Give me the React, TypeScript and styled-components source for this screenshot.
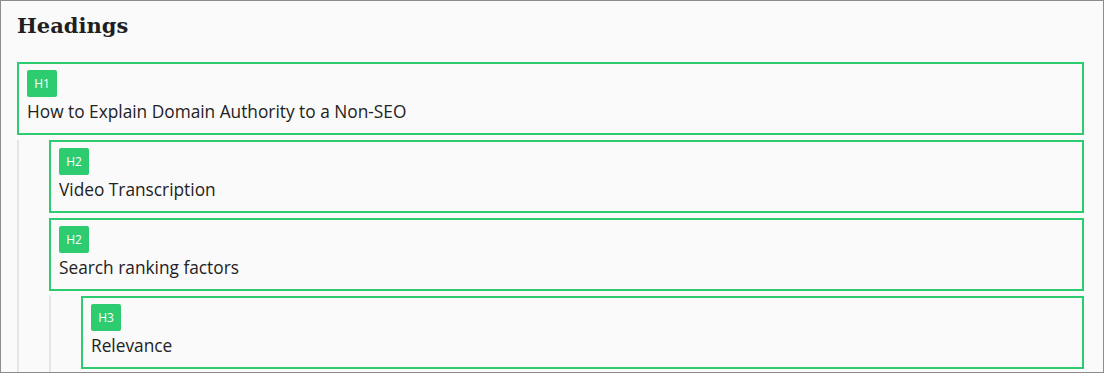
import React from 'react'
import styled, { createGlobalStyle } from 'styled-components'

const GlobalStyle = createGlobalStyle`
  html, body {
    margin: 0;
    padding: 0;
    background: #ffffff;
  }
`

type HeadingNode = {
  level: number
  text: string
  children?: HeadingNode[]
}

const headings: HeadingNode[] = [
  {
    level: 1,
    text: 'How to Explain Domain Authority to a Non-SEO',
    children: [
      { level: 2, text: 'Video Transcription' },
      {
        level: 2,
        text: 'Search ranking factors',
        children: [{ level: 3, text: 'Relevance' }]
      }
    ]
  }
]

const Panel = styled.div`
  box-sizing: border-box;
  width: 1104px;
  height: 373px;
  overflow: hidden;
  border: 1px solid #8c8c8c;
  background: #fafafa;
  padding: 0 19px 0 16px;
`

const Title = styled.h2`
  margin: 0;
  padding: 11px 0 0 0;
  height: 61px;
  box-sizing: border-box;
  font-family: 'DejaVu Serif', serif;
  font-weight: bold;
  font-size: 21px;
  line-height: 28px;
  color: #1f1f1f;
`

const List = styled.div`
  display: flex;
  flex-direction: column;
  gap: 5px;
`

const Children = styled.div`
  display: flex;
  flex-direction: column;
  gap: 5px;
  margin-top: 5px;
  padding-bottom: 20px;
  border-left: 2px solid #e6e6e6;
  padding-left: 30px;
`

const Box = styled.div`
  box-sizing: border-box;
  height: 73px;
  border: 2px solid #2ecc71;
  padding: 6px 8px 0;
  display: flex;
  flex-direction: column;
  align-items: flex-start;
`

const Badge = styled.span`
  width: 30px;
  height: 27px;
  border-radius: 2px;
  background: #2ecc71;
  color: #ffffff;
  font-family: 'Open Sans', sans-serif;
  font-size: 12px;
  font-weight: 400;
  display: flex;
  align-items: center;
  justify-content: center;
`

const HeadingText = styled.div`
  margin-top: 2px;
  font-family: 'Open Sans', sans-serif;
  font-size: 17.3px;
  line-height: 26px;
  color: #222222;
`

const HeadingItem = ({ node }: { node: HeadingNode }) => {
  return (
    <div>
      <Box>
        <Badge>H{node.level}</Badge>
        <HeadingText>{node.text}</HeadingText>
      </Box>
      {node.children && (
        <Children>
          {node.children.map((child, i) => (
            <HeadingItem key={i} node={child} />
          ))}
        </Children>
      )}
    </div>
  )
}

export default function App() {
  return (
    <>
      <GlobalStyle />
      <Panel>
        <Title>Headings</Title>
        <List>
          {headings.map((node, i) => (
            <HeadingItem key={i} node={node} />
          ))}
        </List>
      </Panel>
    </>
  )
}
